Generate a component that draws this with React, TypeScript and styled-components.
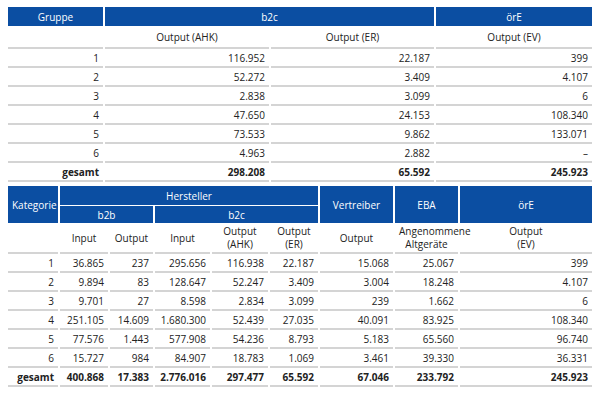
import React from "react";
import styled, { createGlobalStyle } from "styled-components";

const Global = createGlobalStyle`
  body { margin: 0; padding: 7px 8px; font-family: "Open Sans", sans-serif; font-size: 10px; color: #222; background: #fff; }
`;

const Table = styled.table`
  width: 588px;
  border-collapse: separate;
  border-spacing: 2px 0;
  margin-left: -2px;
  table-layout: fixed;
`;

const Th = styled.th<{ $sub?: boolean }>`
  background: #0b4ea2;
  color: #fff;
  font-weight: 400;
  height: ${(p) => (p.$sub ? 17 : 19)}px;
  padding: 0 4px;
  border-bottom: 1px solid #fff;
  text-align: center;
`;

const Sub = styled.td<{ $h?: number }>`
  text-align: center;
  height: ${(p) => p.$h ?? 20}px;
  line-height: 13px;
  padding: 0 4px;
  border-bottom: 2px solid #d4d4d4;
`;

const Td = styled.td<{ $bold?: boolean }>`
  text-align: right;
  height: 17px;
  padding: 0 4px;
  border-bottom: 2px solid #d4d4d4;
  font-weight: ${(p) => (p.$bold ? 700 : 400)};
`;

const Gap = styled.div`
  height: 4px;
`;

const top = [
  ["1", "116.952", "22.187", "399"],
  ["2", "52.272", "3.409", "4.107"],
  ["3", "2.838", "3.099", "6"],
  ["4", "47.650", "24.153", "108.340"],
  ["5", "73.533", "9.862", "133.071"],
  ["6", "4.963", "2.882", "–"],
];

const bottom = [
  ["1", "36.865", "237", "295.656", "116.938", "22.187", "15.068", "25.067", "399"],
  ["2", "9.894", "83", "128.647", "52.247", "3.409", "3.004", "18.248", "4.107"],
  ["3", "9.701", "27", "8.598", "2.834", "3.099", "239", "1.662", "6"],
  ["4", "251.105", "14.609", "1.680.300", "52.439", "27.035", "40.091", "83.925", "108.340"],
  ["5", "77.576", "1.443", "577.908", "54.236", "8.793", "5.183", "65.560", "96.740"],
  ["6", "15.727", "984", "84.907", "18.783", "1.069", "3.461", "39.330", "36.331"],
];
const bottomTotal = ["gesamt", "400.868", "17.383", "2.776.016", "297.477", "65.592", "67.046", "233.792", "245.923"];

export default function App() {
  return (
    <>
      <Global />
      <Table>
        <colgroup>
          <col style={{ width: 95 }} />
          <col style={{ width: 164 }} />
          <col style={{ width: 163 }} />
          <col style={{ width: 156 }} />
        </colgroup>
        <thead>
          <tr>
            <Th>Gruppe</Th>
            <Th colSpan={2}>b2c</Th>
            <Th>örE</Th>
          </tr>
        </thead>
        <tbody>
          <tr>
            <Sub />
            <Sub>Output (AHK)</Sub>
            <Sub>Output (ER)</Sub>
            <Sub>Output (EV)</Sub>
          </tr>
          {top.map((r) => (
            <tr key={r[0]}>
              {r.map((c, i) => (
                <Td key={i}>{c}</Td>
              ))}
            </tr>
          ))}
          <tr>
            <Td $bold>gesamt</Td>
            <Td $bold>298.208</Td>
            <Td $bold>65.592</Td>
            <Td $bold>245.923</Td>
          </tr>
        </tbody>
      </Table>
      <Gap />
      <Table>
        <colgroup>
          <col style={{ width: 50 }} />
          <col style={{ width: 48 }} />
          <col style={{ width: 43 }} />
          <col style={{ width: 55 }} />
          <col style={{ width: 56 }} />
          <col style={{ width: 48 }} />
          <col style={{ width: 73 }} />
          <col style={{ width: 63 }} />
          <col style={{ width: 132 }} />
        </colgroup>
        <thead>
          <tr>
            <Th rowSpan={2}>Kategorie</Th>
            <Th colSpan={5}>Hersteller</Th>
            <Th rowSpan={2}>Vertreiber</Th>
            <Th rowSpan={2}>EBA</Th>
            <Th rowSpan={2}>örE</Th>
          </tr>
          <tr>
            <Th $sub colSpan={2}>b2b</Th>
            <Th $sub colSpan={3}>b2c</Th>
          </tr>
        </thead>
        <tbody>
          <tr>
            <Sub $h={28} />
            <Sub $h={28}>Input</Sub>
            <Sub $h={28}>Output</Sub>
            <Sub $h={28}>Input</Sub>
            <Sub $h={28}>Output<br />(AHK)</Sub>
            <Sub $h={28}>Output<br />(ER)</Sub>
            <Sub $h={28}>Output</Sub>
            <Sub $h={28}>Angenommene<br />Altgeräte</Sub>
            <Sub $h={28}>Output<br />(EV)</Sub>
          </tr>
          {bottom.map((r) => (
            <tr key={r[0]}>
              {r.map((c, i) => (
                <Td key={i}>{c}</Td>
              ))}
            </tr>
          ))}
          <tr>
            {bottomTotal.map((c, i) => (
              <Td key={i} $bold>{c}</Td>
            ))}
          </tr>
        </tbody>
      </Table>
    </>
  );
}
